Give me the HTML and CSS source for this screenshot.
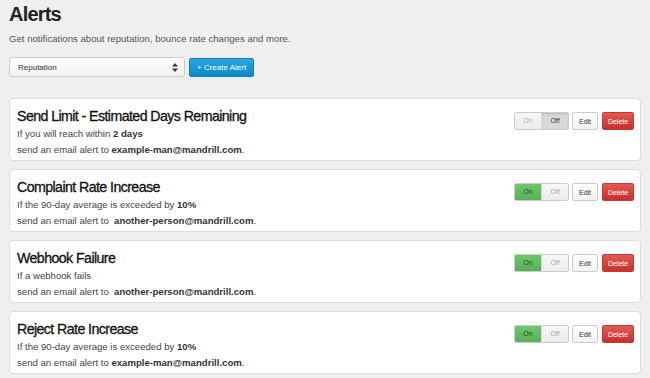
FILE: index.html
```html
<!DOCTYPE html>
<html>
<head>
  <title>Alerts</title>
  <link rel="stylesheet" href="styles.css">
</head>
<body>
  <h1>Alerts</h1>
  <p class="lead">Get notifications about reputation, bounce rate changes and more.</p>

  <div class="toolbar">
    <div class="select">
      <span>Reputation</span>
      <span class="caret">
        <svg width="6" height="9" viewBox="0 0 6 9"><path d="M3 0 L6 3.5 L0 3.5 Z M0 5.5 L6 5.5 L3 9 Z" fill="#333"/></svg>
      </span>
    </div>
    <button class="btn-create">+ Create Alert</button>
  </div>

  <!-- alert list -->
  <div class="alert-card">
    <div class="alert-info">
      <h3>Send Limit - Estimated Days Remaining</h3>
      <p>If you will reach within <b>2 days</b></p>
      <p>send an email alert to <b>example-man@mandrill.com</b>.</p>
    </div>
    <div class="actions">
      <div class="toggle">
        <span class="on">On</span><span class="off active">Off</span>
      </div>
      <button class="btn-edit">Edit</button>
      <button class="btn-delete">Delete</button>
    </div>
  </div>

  <div class="alert-card">
    <div class="alert-info">
      <h3>Complaint Rate Increase</h3>
      <p>If the 90-day average is exceeded by <b>10%</b></p>
      <p>send an email alert to &nbsp;<b>another-person@mandrill.com</b>.</p>
    </div>
    <div class="actions">
      <div class="toggle">
        <span class="on active">On</span><span class="off">Off</span>
      </div>
      <button class="btn-edit">Edit</button>
      <button class="btn-delete">Delete</button>
    </div>
  </div>

  <div class="alert-card">
    <div class="alert-info">
      <h3>Webhook Failure</h3>
      <p>If a webhook fails</p>
      <p>send an email alert to &nbsp;<b>another-person@mandrill.com</b>.</p>
    </div>
    <div class="actions">
      <div class="toggle">
        <span class="on active">On</span><span class="off">Off</span>
      </div>
      <button class="btn-edit">Edit</button>
      <button class="btn-delete">Delete</button>
    </div>
  </div>

  <div class="alert-card">
    <div class="alert-info">
      <h3>Reject Rate Increase</h3>
      <p>If the 90-day average is exceeded by <b>10%</b></p>
      <p>send an email alert to <b>example-man@mandrill.com</b>.</p>
    </div>
    <div class="actions">
      <div class="toggle">
        <span class="on active">On</span><span class="off">Off</span>
      </div>
      <button class="btn-edit">Edit</button>
      <button class="btn-delete">Delete</button>
    </div>
  </div>
</body>
</html>
```

FILE: styles.css
```css
body {
  margin: 0;
  padding: 0 9px;
  background: #efefef;
  font-family: "Liberation Sans", Arial, sans-serif;
  color: #333;
}

h1 {
  margin: 0;
  padding-top: 2px;
  font-size: 20px;
  line-height: 24px;
  letter-spacing: -0.8px;
  color: #222;
}

.lead {
  margin: 6px 0 0;
  font-size: 9.6px;
  line-height: 14px;
  color: #555;
}

.toolbar {
  display: flex;
  align-items: center;
  gap: 4px;
  margin-top: 11px;
}

.select {
  width: 176px;
  height: 20px;
  box-sizing: border-box;
  border: 1px solid #ccc;
  border-radius: 3px;
  background: linear-gradient(#fff, #f1f1f1);
  display: flex;
  align-items: center;
  justify-content: space-between;
  padding: 0 6px 0 8px;
  font-size: 8px;
  color: #333;
}

.caret {
  display: flex;
}

.btn-create {
  height: 19px;
  padding: 0 7px;
  border: 1px solid #0d7fb8;
  border-radius: 2px;
  background: linear-gradient(#28a8e2, #0e88c8);
  color: #fff;
  font-family: inherit;
  font-size: 8px;
}

.alert-card {
  display: flex;
  justify-content: space-between;
  align-items: flex-start;
  margin-top: 8px;
  height: 63px;
  box-sizing: border-box;
  background: #fff;
  border: 1px solid #ddd;
  border-radius: 4px;
  padding: 9px 6px 0 7px;
}

.toolbar + .alert-card {
  margin-top: 21px;
}

.alert-info h3 {
  margin: 0 0 1px;
  font-size: 14.2px;
  line-height: 17px;
  font-weight: normal;
  letter-spacing: -0.58px;
  -webkit-text-stroke: 0.3px #111;
  color: #111;
}

.alert-info p {
  margin: 0;
  font-size: 9.6px;
  line-height: 16px;
  color: #444;
}

.alert-info b {
  color: #333;
}

.actions {
  display: flex;
  gap: 4px;
  margin-top: 4px;
}

.toggle {
  display: flex;
  margin-right: -1px;
  border: 1px solid #ccc;
  border-radius: 2px;
  overflow: hidden;
}

.toggle span {
  width: 26px;
  height: 16px;
  line-height: 16px;
  text-align: center;
  font-size: 7px;
  color: #aaa;
  background: linear-gradient(#f7f7f7, #ececec);
}

.toggle .off {
  border-left: 1px solid #ddd;
}

.toggle .off.active {
  background: #d9d9d9;
  box-shadow: inset 0 1px 2px rgba(0,0,0,0.15);
  color: #333;
}

.toggle .on.active {
  background: linear-gradient(#6cc86c, #56b056);
  color: #234a23;
}

.btn-edit,
.btn-delete {
  height: 18px;
  font-family: inherit;
  font-size: 7px;
  border-radius: 2px;
  padding: 0;
}

.btn-edit {
  width: 26px;
  border: 1px solid #ccc;
  background: linear-gradient(#fff, #f2f2f2);
  color: #333;
}

.btn-delete {
  width: 32px;
  border: 1px solid #c23a34;
  background: linear-gradient(#e25a53, #c9302c);
  color: #fff;
}
```
